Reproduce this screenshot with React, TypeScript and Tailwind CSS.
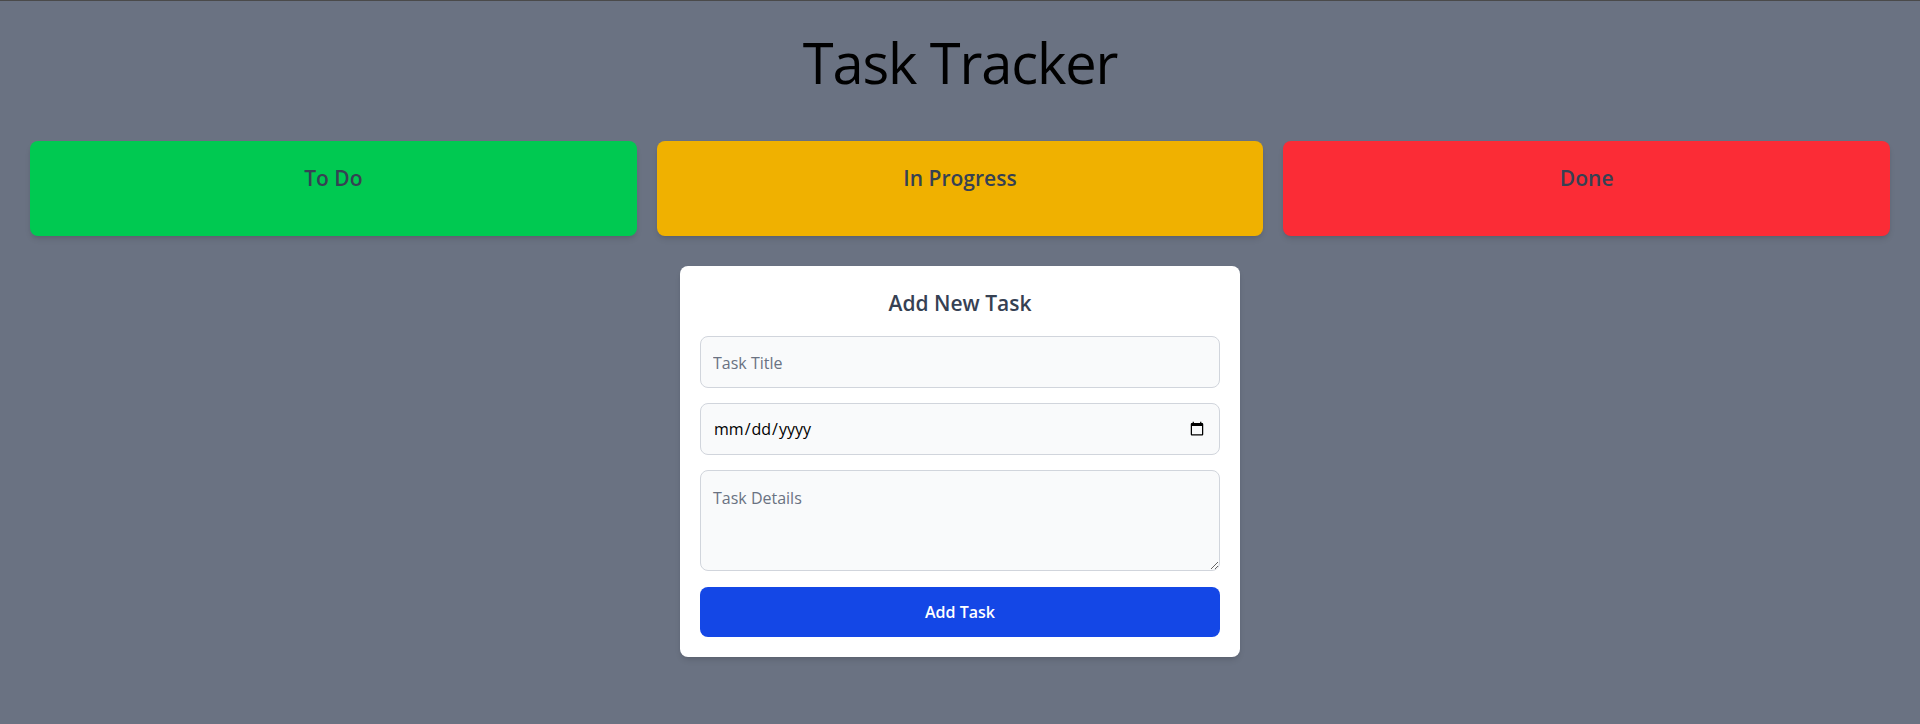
import React, { useState } from 'react';

const columns = [
  { id: 'todo', title: 'To Do', color: 'bg-green-500' },
  { id: 'progress', title: 'In Progress', color: 'bg-yellow-500' },
  { id: 'done', title: 'Done', color: 'bg-red-500' },
];

export default function App(): React.JSX.Element {
  const [title, setTitle] = useState('');
  const [date, setDate] = useState('');
  const [details, setDetails] = useState('');

  return (
    <div className="min-h-screen bg-gray-500 border-t border-[#4a4a4a] font-['Open_Sans',sans-serif]">
      {/* Header */}
      <h1 className="pt-[31px] text-center text-[56px] leading-[60px] tracking-[-0.02em] text-black">Task Tracker</h1>

      {/* Columns */}
      <div className="mt-[49px] grid grid-cols-3 gap-5 px-[30px]">
        {columns.map((col) => (
          <div key={col.id} className={`${col.color} h-[95px] rounded-lg px-5 pt-[21px] shadow-md`}>
            <h2 className="text-center text-[21px] leading-8 font-semibold text-gray-700">{col.title}</h2>
          </div>
        ))}
      </div>

      {/* Add task form */}
      <form
        className="mx-auto mt-[30px] w-[560px] rounded-lg bg-white px-5 pt-[21px] pb-5 shadow-md"
        onSubmit={(e) => e.preventDefault()}
      >
        <h2 className="mb-[17px] text-center text-[21px] leading-8 font-semibold text-gray-700">Add New Task</h2>
        <div className="flex flex-col gap-[15px]">
          <input
            type="text"
            placeholder="Task Title"
            value={title}
            onChange={(e) => setTitle(e.target.value)}
            className="h-[52px] w-full rounded-lg border border-gray-300 bg-gray-50 px-3 pt-[2px] text-base text-gray-900 placeholder:text-gray-500 focus:outline-none"
          />
          <input
            type="date"
            value={date}
            onChange={(e) => setDate(e.target.value)}
            className="h-[52px] w-full rounded-lg border border-gray-300 bg-gray-50 px-3 text-base text-black focus:outline-none"
          />
          <textarea
            placeholder="Task Details"
            value={details}
            onChange={(e) => setDetails(e.target.value)}
            className="h-[101px] w-full rounded-lg border border-gray-300 bg-gray-50 px-3 pt-[15px] pb-3 text-base text-gray-900 placeholder:text-gray-500 focus:outline-none"
          />
          <button
            type="submit"
            className="mt-px h-[50px] w-full rounded-lg bg-blue-700 text-base font-semibold text-white"
          >
            Add Task
          </button>
        </div>
      </form>
    </div>
  );
}
